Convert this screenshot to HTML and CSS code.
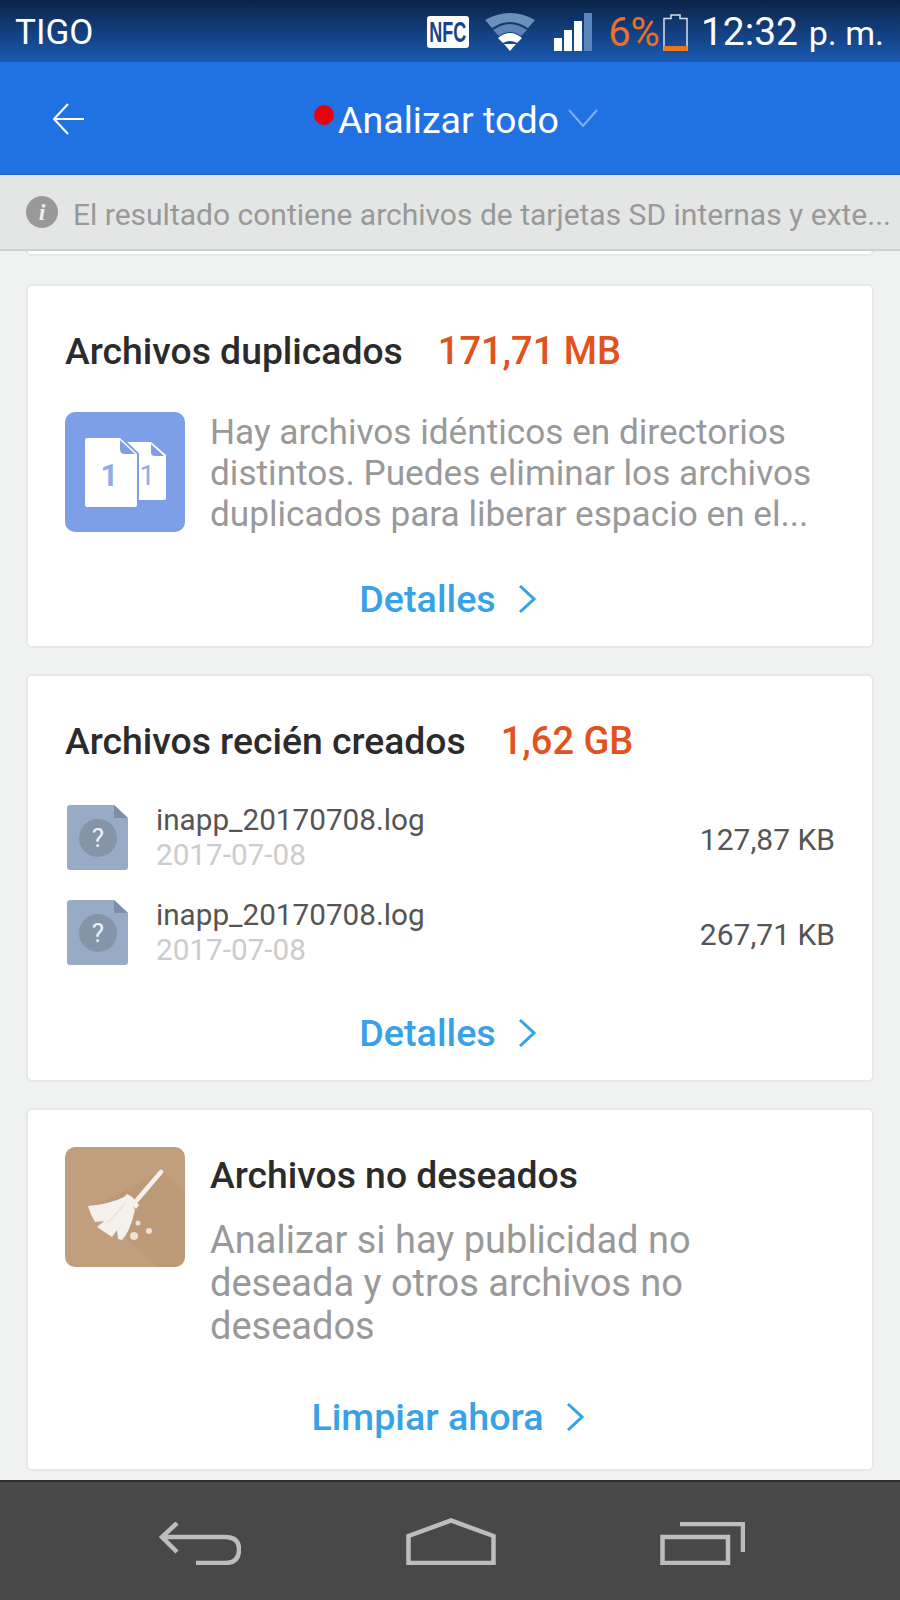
FILE: index.html
```html
<!DOCTYPE html>
<html lang="en">
<head>
    <meta charset="UTF-8">
    <meta name="viewport" content="width=device-width, initial-scale=1.0">
    <title>Analizar todo</title>
    <link rel="stylesheet" href="styles.css">
</head>
<body>
    <div class="screen">
        <div class="status-bar">
            <span class="carrier">TIGO</span>
            <div class="status-right">
                <span class="nfc"><span class="nfc-text">NFC</span></span>
                <svg class="wifi" width="50" height="38" viewBox="0 0 50 38">
                    <path d="M0 7 Q25 -7 50 7 L43 15 Q25 3 7 15 Z" fill="#6d8fbd"/>
                    <path d="M8 17 Q25 5 42 17 L36 23 Q25 15 14 23 Z" fill="#5f83b4"/>
                    <path d="M13 25 Q25 15 37 25 L32 30 Q25 26 18 30 Z" fill="#fff"/>
                    <path d="M19 31 H31 L25 38 Z" fill="#fff"/>
                </svg>
                <svg class="signal" width="38" height="38" viewBox="0 0 38 38">
                    <rect x="0" y="25" width="8" height="13" fill="#fff"/>
                    <rect x="10" y="17" width="8" height="21" fill="#fff"/>
                    <rect x="20" y="8" width="8" height="30" fill="#fff"/>
                    <rect x="30" y="0" width="8" height="38" fill="#5b86bd"/>
                </svg>
                <span class="percent">6%</span>
                <svg class="battery" width="25" height="37" viewBox="0 0 25 37">
                    <path d="M8 4.5 V1 H17 V4.5 H24 V36 H1 V4.5 Z" fill="none" stroke="#d7e0ec" stroke-width="1.5"/>
                    <rect x="0.5" y="32" width="24" height="5" fill="#e8781f"/>
                </svg>
                <span class="clock">12:32 <small>p. m.</small></span>
            </div>
        </div>

        <div class="app-bar">
            <svg class="back" width="32" height="32" viewBox="0 0 32 32">
                <path d="M16 1 L2 16 L16 31 M2 16 H32" fill="none" stroke="#fff" stroke-width="2"/>
            </svg>
            <div class="app-title">
                <span class="red-dot"></span>
                <span class="app-title-text">Analizar todo</span>
                <svg class="caret" width="30" height="18" viewBox="0 0 30 18">
                    <path d="M1 1 L15 17 L29 1" fill="none" stroke="#83aef0" stroke-width="2"/>
                </svg>
            </div>
        </div>

        <div class="notice">
            <span class="info-icon">i</span>
            <span class="notice-text">El resultado contiene archivos de tarjetas SD internas y exte...</span>
        </div>

        <div class="content">
            <div class="card card-stub"></div>

            <div class="card">
                <div class="card-head">
                    <h2>Archivos duplicados</h2>
                    <span class="amount">171,71 MB</span>
                </div>
                <div class="card-body">
                    <div class="tile tile-blue">
                        <svg width="120" height="120" viewBox="0 0 120 120">
                            <path d="M60 30 H86 L101 43 V86 Q101 88 99 88 H60 Z" fill="#fff"/>
                            <path d="M86 32 L99 44 H90 Q86 44 86 40 Z" fill="#7c9fe8"/>
                            <path d="M22 26 H55 L72 42 V93 Q72 95 70 95 H22 Q20 95 20 93 V28 Q20 26 22 26 Z" fill="#fff" stroke="#7c9fe8" stroke-width="4" paint-order="stroke"/>
                            <path d="M55 28 L70 42 H60 Q55 42 55 37 Z" fill="#7c9fe8"/>
                            <text x="44.5" y="74" text-anchor="middle" class="dup-big">1</text>
                            <text x="82" y="73" text-anchor="middle" class="dup-small">1</text>
                        </svg>
                    </div>
                    <p class="desc">Hay archivos idénticos en directorios distintos. Puedes eliminar los archivos duplicados para liberar espacio en el...</p>
                </div>
                <a class="more">Detalles
                    <svg width="18" height="28" viewBox="0 0 18 28"><path d="M2 1 L16 14 L2 27" fill="none" stroke="#37a2e6" stroke-width="3"/></svg>
                </a>
            </div>

            <div class="card">
                <div class="card-head">
                    <h2>Archivos recién creados</h2>
                    <span class="amount">1,62 GB</span>
                </div>
                <div class="file-list">
                    <div class="file-row">
                        <svg class="file-icon" width="61" height="65" viewBox="0 0 61 65">
                            <path d="M3 0 H47 L61 13 V62 Q61 65 58 65 H3 Q0 65 0 62 V3 Q0 0 3 0 Z" fill="#98abc4"/>
                            <path d="M47 0 L61 13 H47 Z" fill="#7c8fa9"/>
                            <circle cx="31" cy="33" r="19" fill="#8595a9"/>
                            <text x="31" y="42" text-anchor="middle" class="file-q">?</text>
                        </svg>
                        <div class="file-info">
                            <div class="file-name">inapp_20170708.log</div>
                            <div class="file-date">2017-07-08</div>
                        </div>
                        <div class="file-size">127,87 KB</div>
                    </div>
                    <div class="file-row">
                        <svg class="file-icon" width="61" height="65" viewBox="0 0 61 65">
                            <path d="M3 0 H47 L61 13 V62 Q61 65 58 65 H3 Q0 65 0 62 V3 Q0 0 3 0 Z" fill="#98abc4"/>
                            <path d="M47 0 L61 13 H47 Z" fill="#7c8fa9"/>
                            <circle cx="31" cy="33" r="19" fill="#8595a9"/>
                            <text x="31" y="42" text-anchor="middle" class="file-q">?</text>
                        </svg>
                        <div class="file-info">
                            <div class="file-name">inapp_20170708.log</div>
                            <div class="file-date">2017-07-08</div>
                        </div>
                        <div class="file-size">267,71 KB</div>
                    </div>
                </div>
                <a class="more">Detalles
                    <svg width="18" height="28" viewBox="0 0 18 28"><path d="M2 1 L16 14 L2 27" fill="none" stroke="#37a2e6" stroke-width="3"/></svg>
                </a>
            </div>

            <div class="card card-junk">
                <div class="card-body">
                    <div class="tile tile-brown">
                        <svg width="120" height="120" viewBox="0 0 120 120">
                            <path d="M98 24 L120 46 V110 Q120 120 110 120 H92 L28 60 Z" fill="#b5926f" opacity=".45"/>
                            <path d="M96 25 L72 53" stroke="#f4f1ec" stroke-width="4.5" stroke-linecap="round"/>
                            <path d="M62 47 Q69 50 74 58 L71 62 Q63 53 58 51 Z" fill="#f4f1ec"/>
                            <path d="M23 59 Q45 57 59 50 Q67 54 70 63 Q65 85 57 93 L53 92 L52 83 L47 90 L32 80 L39 74 L30 75 Q25 67 23 59 Z" fill="#f4f1ec"/>
                            <path d="M60 56 Q48 72 42 76" fill="none" stroke="#e6e2dc" stroke-width="1.5"/>
                            <circle cx="73" cy="76" r="2.5" fill="#e9e2d8"/>
                            <circle cx="84" cy="84" r="3" fill="#e9e2d8"/>
                            <circle cx="69" cy="89" r="4" fill="#e9e2d8"/>
                        </svg>
                    </div>
                    <div class="junk-text">
                        <h2>Archivos no deseados</h2>
                        <p class="desc">Analizar si hay publicidad no deseada y otros archivos no deseados</p>
                    </div>
                </div>
                <a class="more">Limpiar ahora
                    <svg width="18" height="28" viewBox="0 0 18 28"><path d="M2 1 L16 14 L2 27" fill="none" stroke="#37a2e6" stroke-width="3"/></svg>
                </a>
            </div>
        </div>

        <div class="nav-bar">
            <svg width="82" height="43" viewBox="0 0 82 43">
                <path d="M18 1 L3 15 L18 30 M3 15 H66 Q80 15 80 27.5 Q80 41 66 41 H37" fill="none" stroke="#bdbdbd" stroke-width="4.5"/>
            </svg>
            <svg width="90" height="47" viewBox="0 0 90 47">
                <path d="M2.5 45 V18 L45 2.5 L87.5 18 V45 Z" fill="none" stroke="#bdbdbd" stroke-width="4.5"/>
            </svg>
            <svg width="85" height="43" viewBox="0 0 85 43">
                <path d="M2.5 15 H68 V41 H2.5 Z" fill="none" stroke="#bdbdbd" stroke-width="4.5"/>
                <path d="M20 2 H83 V30" fill="none" stroke="#bdbdbd" stroke-width="4.5"/>
            </svg>
        </div>
    </div>
</body>
</html>
```

FILE: styles.css
```css
* {
    box-sizing: border-box;
}

body {
    margin: 0;
    font-family: Roboto, "Noto Sans", sans-serif;
}

.screen {
    width: 900px;
    height: 1600px;
    display: flex;
    flex-direction: column;
    overflow: hidden;
    background-color: #f0f2f1;
}

.status-bar {
    height: 62px;
    flex: none;
    display: flex;
    align-items: center;
    justify-content: space-between;
    padding: 2px 16px 0 15px;
    background: linear-gradient(#0a2347, #1b5ab2);
    color: #fff;
}

.carrier {
    font-size: 35px;
}

.status-right {
    display: flex;
    align-items: center;
}

.nfc {
    width: 42px;
    height: 32px;
    margin-right: 16px;
    display: flex;
    align-items: center;
    justify-content: center;
    border-radius: 3px;
    background-color: #fff;
}

/* the glyphs on the real icon are very condensed */
.nfc-text {
    display: inline-block;
    transform: scaleX(0.62);
    color: #17438c;
    font-family: "Liberation Sans", sans-serif;
    font-size: 29px;
    font-weight: bold;
}

.wifi {
    margin-right: 19px;
}

.signal {
    margin-right: 16px;
}

.percent {
    margin-right: 3px;
    font-size: 40px;
    color: #e8702a;
}

.battery {
    margin-right: 13px;
}

.clock {
    font-size: 39px;
}

.clock small {
    margin-left: 1px;
    font-size: 34px;
}

.app-bar {
    height: 112px;
    flex: none;
    position: relative;
    display: flex;
    align-items: center;
    justify-content: center;
    background-color: #2072e3;
    color: #fff;
}

.back {
    position: absolute;
    left: 52px;
    top: 41px;
}

.app-title {
    display: flex;
    align-items: center;
    position: relative;
    left: 6px;
    font-size: 37.6px;
}

.app-title-text {
    margin-top: 4px;
}

.red-dot {
    width: 20px;
    height: 20px;
    margin: -6px 4px 0 0;
    border-radius: 50%;
    background-color: #e8000e;
}

.caret {
    margin-left: 9px;
}

.notice {
    height: 77px;
    flex: none;
    display: flex;
    align-items: center;
    padding-left: 26px;
    background-color: #e4e6e5;
    border-top: 1px solid #1d62c0;
    border-bottom: 2px solid #cfd1d0;
}

.info-icon {
    width: 32px;
    height: 32px;
    margin-right: 15px;
    border-radius: 50%;
    background-color: #999;
    color: #eee;
    font-family: "Liberation Serif", serif;
    font-size: 24px;
    font-style: italic;
    font-weight: bold;
    line-height: 32px;
    text-align: center;
}

.notice-text {
    margin-top: 4px;
    font-size: 30px;
    color: #999;
    white-space: nowrap;
}

.content {
    flex: 1;
    padding: 0 26px;
    display: flex;
    flex-direction: column;
    gap: 26px;
    overflow: hidden;
}

.card {
    flex: none;
    background-color: #fff;
    border: 2px solid #e6e8e7;
    border-radius: 6px;
}

.card-stub {
    height: 5px;
    margin-bottom: 2px;
    border-top: none;
    border-radius: 0 0 6px 6px;
}

.card-head {
    display: flex;
    align-items: center;
    padding: 44px 37px 0 37px;
    gap: 35px;
}

h2 {
    margin: 0;
    font-size: 37.3px;
    font-weight: 500;
    line-height: 43px;
    color: #2b2b2b;
}

.amount {
    font-size: 38px;
    font-weight: 500;
    line-height: 43px;
    color: #e2521d;
}

.card-body {
    display: flex;
    align-items: flex-start;
    gap: 25px;
    padding: 39px 37px 0 37px;
}

.tile {
    width: 120px;
    height: 120px;
    flex: none;
    border-radius: 10px;
    overflow: hidden;
}

.tile svg {
    display: block;
}

.tile-blue {
    background-color: #7c9fe8;
}

.tile-brown {
    background-color: #c19e7e;
}

.dup-big {
    font-size: 31px;
    font-weight: 700;
    fill: #8fabe9;
}

.dup-small {
    font-size: 28px;
    fill: #8fabe9;
}

.desc {
    margin: 0;
    font-size: 35.2px;
    line-height: 41px;
    color: #999;
}

.more {
    display: flex;
    align-items: center;
    justify-content: center;
    gap: 22px;
    height: 44px;
    margin: 42px 0 25px 0;
    padding-right: 5px;
    font-size: 37.7px;
    font-weight: 500;
    color: #37a2e6;
}

.file-list {
    display: flex;
    flex-direction: column;
    gap: 24px;
    padding: 39px 37px 1px 39px;
}

.file-row {
    display: flex;
    align-items: center;
}

.file-icon {
    margin-right: 28px;
}

.file-q {
    font-size: 26px;
    fill: #eef1f5;
}

.file-info {
    flex: 1;
}

.file-name {
    font-size: 29.7px;
    line-height: 35px;
    color: #555;
}

.file-date {
    font-size: 29.7px;
    line-height: 36px;
    color: #ccc;
}

.file-size {
    margin-top: 3px;
    font-size: 30px;
    color: #555;
}

.card-junk .card-body {
    padding-top: 37px;
}

.card-junk .more {
    margin: 47px 0 30px 0;
}

.junk-text {
    padding: 7px 70px 0 0;
}

.junk-text h2 {
    margin-bottom: 22px;
}

.junk-text .desc {
    font-size: 38px;
    line-height: 43px;
}

.nav-bar {
    height: 120px;
    flex: none;
    display: flex;
    align-items: flex-end;
    justify-content: space-between;
    padding: 0 155px 35px 159px;
    background-color: #484848;
    border-top: 2px solid #2e2e2e;
}
```
